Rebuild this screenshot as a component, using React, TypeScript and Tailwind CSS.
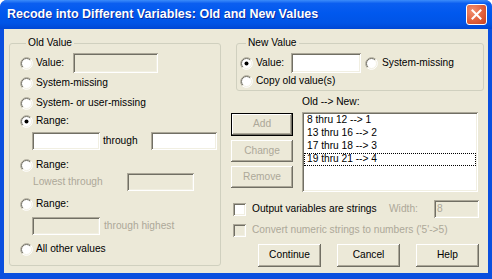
import React from 'react'

const SUNKEN =
  'shadow-[inset_1px_1px_0_#ACA899,inset_-1px_-1px_0_#FFFFFF,inset_2px_2px_0_#716F64,inset_-2px_-2px_0_#F1EFE2]'
const RAISED =
  'shadow-[inset_-1px_-1px_0_#716F64,inset_1px_1px_0_#FFFFFF,inset_-2px_-2px_0_#ACA899]'

function Radio({ checked = false }: { checked?: boolean }) {
  return (
    <svg width="13" height="13" viewBox="0 0 13 13" className="shrink-0">
      <circle cx="6.5" cy="6.5" r="5.5" fill="#FFFFFF" />
      <path d="M2.26 10.74 A6 6 0 0 1 10.74 2.26" fill="none" stroke="#ACA899" />
      <path d="M10.74 2.26 A6 6 0 0 1 2.26 10.74" fill="none" stroke="#FFFFFF" />
      <path d="M2.96 10.04 A5 5 0 0 1 10.04 2.96" fill="none" stroke="#716F64" />
      <path d="M10.04 2.96 A5 5 0 0 1 2.96 10.04" fill="none" stroke="#F1EFE2" />
      {checked && <circle cx="6.5" cy="6.5" r="2" fill="#000000" />}
    </svg>
  )
}

function Checkbox({ disabled = false }: { disabled?: boolean }) {
  return (
    <div className={`h-[13px] w-[13px] shrink-0 ${SUNKEN} ${disabled ? 'bg-[#ECE9D8]' : 'bg-white'}`} />
  )
}

function Field({ w, h = 18, white = false, value }: { w: number; h?: number; white?: boolean; value?: string }) {
  return (
    <div
      className={`flex shrink-0 items-center pl-[3px] text-[#ACA899] ${SUNKEN} ${white ? 'bg-white' : 'bg-[#ECE9D8]'}`}
      style={{ width: w, height: h }}
    >
      {value}
    </div>
  )
}

function Button({ label, disabled = false, isDefault = false, w = 62, h = 22 }: {
  label: string
  disabled?: boolean
  isDefault?: boolean
  w?: number
  h?: number
}) {
  return (
    <div
      className={`flex shrink-0 items-center justify-center bg-[#ECE9D8] ${RAISED}
        ${isDefault ? 'border border-[#000000]' : ''}
        ${disabled ? 'text-[#ACA899]' : 'text-black'}`}
      style={{ width: w, height: h }}
    >
      {label}
    </div>
  )
}

function Group({ title, className, children }: { title: string; className: string; children: React.ReactNode }) {
  return (
    <div className={`rounded-[3px] border border-[#D0D0BF] ${className}`}>
      <span className="-mt-[7px] ml-[6px] block w-fit bg-[#ECE9D8] px-[2px] leading-[12px]">{title}</span>
      {children}
    </div>
  )
}

export default function App() {
  return (
    <div className="h-[279px] w-[492px] bg-white font-['Liberation_Sans',Arial,sans-serif] text-[10.2px] leading-none text-black select-none">
      <div className="flex h-full flex-col overflow-hidden rounded-t-[7px] bg-[#0A4FDF]">
        {/* ── Title bar ─────────────────────────────── */}
        <div className="flex h-[29px] shrink-0 items-center justify-between bg-[linear-gradient(to_bottom,#3C8CFA_0%,#0B5EF0_12%,#0058EE_45%,#0054E6_80%,#0047D4_100%)] pl-[7px] pr-[5px]">
          <span className="text-[12.5px] font-bold text-white [text-shadow:1px_1px_0_#0C2A9C]">
            Recode into Different Variables: Old and New Values
          </span>
          <div className="flex h-[21px] w-[21px] items-center justify-center rounded-[3px] border border-white bg-[radial-gradient(circle_at_30%_30%,#F29070_0%,#E0603C_55%,#C8401E_100%)]">
            <svg width="11" height="11" viewBox="0 0 11 11">
              <path d="M1.5 1.5 L9.5 9.5 M9.5 1.5 L1.5 9.5" stroke="#FFFFFF" strokeWidth="2" strokeLinecap="square" />
            </svg>
          </div>
        </div>

        {/* ── Dialog body ───────────────────────────── */}
        <div className="mx-[4px] mb-[6px] flex flex-1 bg-[#ECE9D8] pl-[5px]">
          {/* Old Value */}
          <Group title="Old Value" className="mt-[14px] h-fit w-[212px] pb-[8px] pl-[10px]">
            <div className="mt-[4px] flex h-[20px] items-center">
              <Radio />
              <span className="ml-[3px] w-[37px]">Value:</span>
              <Field w={85} h={20} />
            </div>
            <div className="flex h-[20px] items-center">
              <Radio />
              <span className="ml-[3px]">System-missing</span>
            </div>
            <div className="flex h-[20px] items-center">
              <Radio />
              <span className="ml-[3px]">System- or user-missing</span>
            </div>
            <div className="flex h-[16px] items-center">
              <Radio checked />
              <span className="ml-[3px]">Range:</span>
            </div>
            <div className="mt-[3px] flex h-[18px] items-center pl-[12px]">
              <Field w={68} white />
              <span className="w-[51px] pl-[3px]">through</span>
              <Field w={66} white />
            </div>
            <div className="mt-[7px] flex h-[16px] items-center">
              <Radio />
              <span className="ml-[3px]">Range:</span>
            </div>
            <div className="flex h-[18px] items-center pl-[13px]">
              <span className="w-[94px] text-[#ACA899]">Lowest through</span>
              <Field w={67} />
            </div>
            <div className="mt-[5px] flex h-[16px] items-center">
              <Radio />
              <span className="ml-[3px]">Range:</span>
            </div>
            <div className="mt-[5px] flex h-[18px] items-center pl-[12px]">
              <Field w={68} />
              <span className="pl-[4px] text-[#ACA899]">through highest</span>
            </div>
            <div className="mt-[6px] flex h-[16px] items-center">
              <Radio />
              <span className="ml-[3px]">All other values</span>
            </div>
          </Group>

          {/* Right side */}
          <div className="ml-[10px] flex w-[253px] flex-col">
            <Group title="New Value" className="ml-[5px] mt-[14px] w-[248px] pl-[3px]">
              <div className="mt-[4px] flex h-[20px] items-center">
                <Radio checked />
                <span className="ml-[3px] w-[35px]">Value:</span>
                <Field w={70} h={20} white />
                <div className="ml-[4px]">
                  <Radio />
                </div>
                <span className="ml-[4px]">System-missing</span>
              </div>
              <div className="flex h-[17px] items-center">
                <Radio />
                <span className="ml-[3px]">Copy old value(s)</span>
              </div>
            </Group>

            <div className="mt-[4px] flex h-[14px] items-center pl-[71px]">Old --&gt; New:</div>

            <div className="mt-[3px] flex">
              <div className="flex w-[62px] flex-col">
                <div className="mt-[1px]">
                  <Button label="Add" disabled isDefault h={23} />
                </div>
                <div className="mt-[4px]">
                  <Button label="Change" disabled />
                </div>
                <div className="mt-[4px]">
                  <Button label="Remove" disabled />
                </div>
              </div>
              <div className={`ml-[9px] h-[80px] w-[176px] bg-white p-[2px] ${SUNKEN}`}>
                {['8 thru 12 --> 1', '13 thru 16 --> 2', '17 thru 18 --> 3'].map((item) => (
                  <div key={item} className="flex h-[13px] items-center border border-transparent pl-[2px]">
                    {item}
                  </div>
                ))}
                <div className="flex h-[13px] items-center border border-dotted border-black pl-[2px]">
                  19 thru 21 --&gt; 4
                </div>
              </div>
            </div>

            <div className="mt-[8px] flex h-[18px] items-center pl-[2px]">
              <Checkbox />
              <span className="ml-[6px] w-[137px]">Output variables are strings</span>
              <span className="w-[45px] text-[#ACA899]">Width:</span>
              <Field w={45} value="8" />
            </div>
            <div className="mt-[4px] flex h-[16px] items-center pl-[2px]">
              <Checkbox disabled />
              <span className="ml-[6px] text-[#ACA899]">Convert numeric strings to numbers ('5'-&gt;5)</span>
            </div>

            <div className="mt-[6px] flex gap-[16px] pl-[27px]">
              <Button label="Continue" w={63} h={23} />
              <Button label="Cancel" w={63} h={23} />
              <Button label="Help" w={63} h={23} />
            </div>
          </div>
        </div>
      </div>
    </div>
  )
}
